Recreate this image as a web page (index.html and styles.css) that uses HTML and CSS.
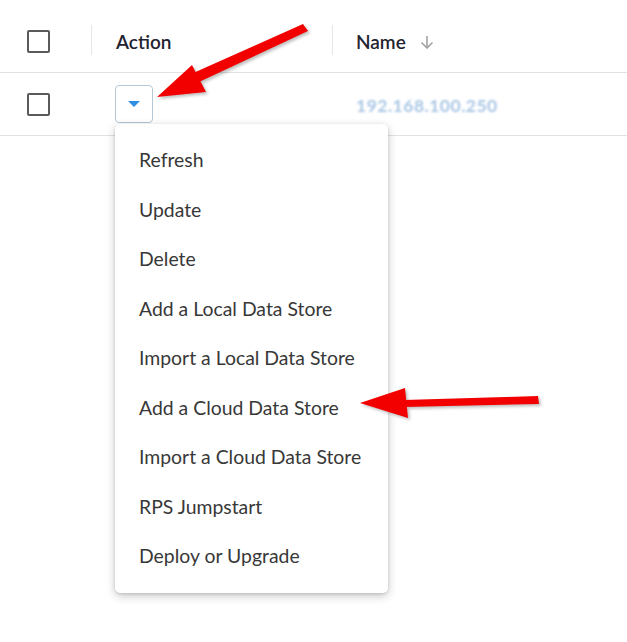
FILE: index.html
```html
<!DOCTYPE html>
<html>
<head>
<meta charset="utf-8">
<link rel="stylesheet" href="styles.css">
</head>
<body>
<div class="grid">
  <div class="row head">
    <div class="cell c-check"><span class="checkbox"></span></div>
    <div class="cell c-action"><span class="sep"></span><span class="htext">Action</span></div>
    <div class="cell c-name"><span class="sep"></span><span class="htext">Name</span>
      <svg class="sort" width="14" height="14" viewBox="0 0 14 14"><path d="M7 1 V13 M1.5 7.5 L7 13 L12.5 7.5"/></svg>
    </div>
  </div>
  <div class="row body">
    <div class="cell c-check"><span class="checkbox"></span></div>
    <div class="cell c-action">
      <div class="dd-wrap">
        <button class="dd-btn"><span class="tri"></span></button>
        <ul class="menu">
          <li>Refresh</li>
          <li>Update</li>
          <li>Delete</li>
          <li>Add a Local Data Store</li>
          <li>Import a Local Data Store</li>
          <li>Add a Cloud Data Store</li>
          <li>Import a Cloud Data Store</li>
          <li>RPS Jumpstart</li>
          <li>Deploy or Upgrade</li>
        </ul>
      </div>
    </div>
    <div class="cell c-name"><span class="ip">192.168.100.250</span></div>
  </div>
</div>
<svg class="arrows" width="627" height="642" viewBox="0 0 627 642">
  <g class="arrow">
    <polygon points="303,24 308,31 199,82 191,74"/>
    <polygon points="157,97 192,65 206,92"/>
    <polygon points="538,396 539,404 404,407 404,400"/>
    <polygon points="360,403 405,388 408,418"/>
  </g>
</svg>
</body>
</html>
```
FILE: styles.css
```css
html, body {
  margin: 0;
  padding: 0;
  background: #fff;
}
body {
  font-family: "Source Sans Pro", Lato, "Liberation Sans", sans-serif;
  width: 627px;
  height: 642px;
  overflow: hidden;
  position: relative;
}
.grid {
  display: flex;
  flex-direction: column;
}
.row {
  display: flex;
  border-bottom: 1px solid #e2e2e2;
}
.row.head {
  height: 72px;
}
.row.body {
  height: 62px;
}
.cell {
  display: flex;
  align-items: center;
  position: relative;
}
.c-check {
  width: 91px;
  padding-left: 27px;
  box-sizing: border-box;
}
.c-action {
  width: 241px;
  padding-left: 25px;
  box-sizing: border-box;
}
.c-name {
  flex: 1;
  padding-left: 24px;
  box-sizing: border-box;
}
.head .cell {
  padding-top: 11px;
}
.sep {
  position: absolute;
  left: 0;
  top: 25px;
  height: 30px;
  width: 1px;
  background: #e6e6e6;
}
.checkbox {
  display: block;
  width: 19px;
  height: 19px;
  border: 2px solid #5a5a5a;
  border-radius: 2px;
}
.htext {
  font-size: 19px;
  font-weight: 600;
  color: #1f2330;
}
.sort {
  margin-left: 14px;
  margin-top: 0;
  fill: none;
  stroke: #a3a3a3;
  stroke-width: 1.6;
}
.dd-wrap {
  position: relative;
  margin-left: -1px;
}
.dd-btn {
  display: flex;
  align-items: center;
  justify-content: center;
  width: 38px;
  height: 38px;
  margin: 0;
  padding: 0;
  background: #fff;
  border: 1px solid #b3c7d6;
  border-radius: 4px;
}
.tri {
  width: 0;
  height: 0;
  border-left: 6px solid transparent;
  border-right: 6px solid transparent;
  border-top: 6px solid #2e8fe3;
}
.menu {
  position: absolute;
  left: 0;
  top: 39px;
  width: 273px;
  margin: 0;
  padding: 11px 0 12px;
  list-style: none;
  background: #fff;
  border-radius: 5px;
  box-shadow: 0 3px 10px rgba(0,0,0,0.22), 0 1px 3px rgba(0,0,0,0.12);
  z-index: 2;
}
.menu li {
  height: 49.5px;
  display: flex;
  align-items: center;
  padding-left: 24px;
  font-size: 19.4px;
  color: #383838;
}
.ip {
  font-size: 17.5px;
  font-weight: 700;
  color: #a9c6e4;
  filter: blur(1.3px);
  letter-spacing: 0.5px;
  margin-top: 2px;
}
.arrows {
  position: absolute;
  left: 0;
  top: 0;
  z-index: 5;
  pointer-events: none;
}
.arrow {
  fill: #f20000;
  filter: drop-shadow(2px 2px 1.5px rgba(0,0,0,0.25));
}
```
